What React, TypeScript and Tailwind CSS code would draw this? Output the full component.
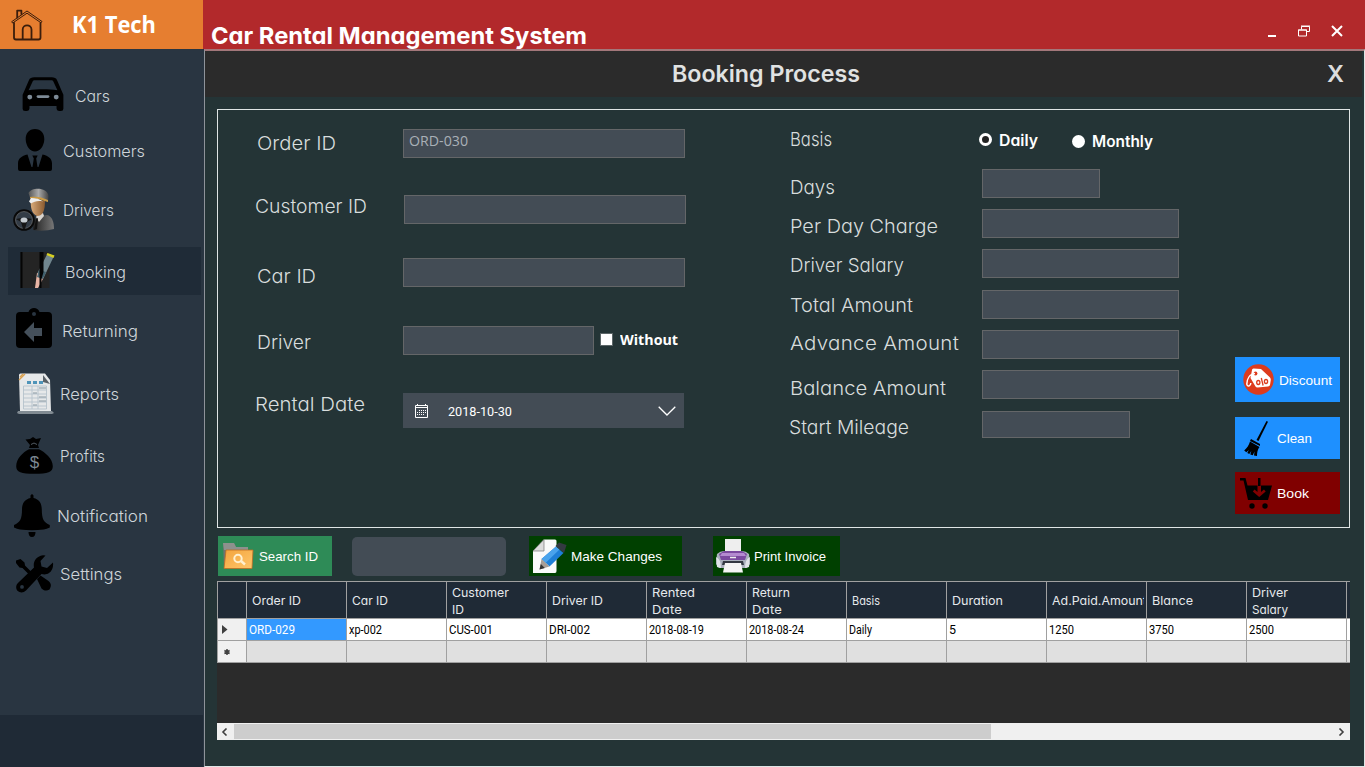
import { useLayoutEffect, useRef, type ReactNode } from "react";

const GOTHIC = "font-['Inter',sans-serif] [font-feature-settings:'cv11','ss03']";
const SANS = "font-['Liberation_Sans',sans-serif]";

/* A single line of text that fills a given width: the glyphs are widened a little, then tracked out, or condensed. */
function Fit({ w, className = "", children }: { w: number; className?: string; children: string }) {
  const ref = useRef<HTMLSpanElement>(null);
  useLayoutEffect(() => {
    const el = ref.current;
    if (!el) return;
    el.style.letterSpacing = "0px";
    el.style.transform = "none";
    const natural = el.getBoundingClientRect().width;
    const scale = Math.min(w / natural, 1.08);
    el.style.transform = `scaleX(${scale})`;
    if (natural * scale < w) el.style.letterSpacing = `${(w / scale - natural) / (children.length - 0.5)}px`;
  }, [w, children]);
  return (
    <span className={`block shrink-0 whitespace-nowrap ${className}`} style={{ width: w }}>
      <span ref={ref} className="inline-block origin-left">
        {children}
      </span>
    </span>
  );
}

const HomeIcon = () => (
  <svg className="h-8 w-8" viewBox="0 0 32 32" fill="none" stroke="#3a1d0c" strokeWidth="1.800" strokeLinejoin="round" strokeLinecap="round">
    <path d="M1 12.500 16 2l15 10.500-1 1.300L16 4.200 2 13.800z" strokeWidth="1" />
    <path d="M3 14v14.500a2 2 0 0 0 2 2h22.500a2 2 0 0 0 2-2V14M6.200 8.500V1.600h4.200v3.500M11.700 30V20.500c0-5.500 8.800-5.500 8.800 0V30" />
  </svg>
);
const CarIcon = () => (
  <svg className="h-[34px] w-[42px]" viewBox="0 0 42 34.700">
    <path fillRule="evenodd" d="M2 14 6.500 3.500C7.500 1 9.500.3 12 .3h18c2.500 0 4.500.7 5.500 3.200L40 14l1.800 4v14a2.500 2.500 0 0 1-2.500 2.700h-2a2.500 2.500 0 0 1-2.500-2.500V29.500H7.200v2.700a2.500 2.500 0 0 1-2.500 2.500h-2A2.500 2.500 0 0 1 .2 32V18zM6.300 13.500C15 12 27 12 35.700 13.500L31.800 5c-.6-1.200-1.300-1.600-2.800-1.600H13c-1.500 0-2.200.4-2.800 1.600z" />
    <g fill="#7d8a96"><circle cx="7.500" cy="20.500" r="2.500" /><circle cx="34.500" cy="20.500" r="2.500" /><rect x="14.500" y="18.500" width="13" height="3" rx="1.500" /></g>
  </svg>
);
const PersonIcon = () => (
  <svg className="h-[42px] w-[34px]" viewBox="0 0 34 42">
    <path d="M17 0c6 0 9.500 4.500 9.300 10.500C26 17 22 22.500 17 22.500S8 17 7.700 10.500C7.500 4.500 11 0 17 0zM9.500 25.500 13.500 38h1l1.300-8.500-1.500-3h5.400l-1.500 3 1.300 8.500h1l4-12.500c6 1.500 9.500 4 9.500 9V40q0 2-2 2H2q-2 0-2-2v-5.500c0-5 3.500-7.500 9.500-9z" />
  </svg>
);
const DriverIcon = () => (
  <svg className="h-[43px] w-[41px]" viewBox="0 0 41 43">
    <defs>
      <linearGradient id="coat" x1="0" x2="1"><stop stopColor="#222" /><stop offset="1" stopColor="#777" /></linearGradient>
      <linearGradient id="cap" x1="0" x2="1"><stop stopColor="#555" /><stop offset=".5" stopColor="#aaa" /><stop offset="1" stopColor="#444" /></linearGradient>
      <linearGradient id="skin" x1="0" x2="1"><stop stopColor="#d9ab7b" /><stop offset="1" stopColor="#8a5a2f" /></linearGradient>
    </defs>
    <path d="M20 42c0-8 2-13 6-14l8-1c5 1 7 7 7 14q-10 3-21 1z" fill="url(#coat)" />
    <path d="m23 29 2-3 5-1 1 3-5 6z" fill="#d8d4cf" /><path d="m23 31 2-1-1 11-3 1z" fill="#111" />
    <path d="M18 10c-1 10 1 16 6 18 6 0 8-6 8-15z" fill="url(#skin)" />
    <path d="M15.500 5c3-6 19-6 20 3l-.5 6c-6-3-12-5-18-4.500z" fill="url(#cap)" />
    <path d="M17 9c6-1 12 0 18 3v2c-6-2-12-4-18-3.500z" fill="#c99a45" />
    <path d="M16 13.500 18 10c5 0 9 1 12 3.500-5-1-9 0-12 2z" fill="#eee" />
    <circle cx="11" cy="32" r="9.700" fill="#333c46" stroke="#090909" strokeWidth="2.200" />
    <circle cx="11" cy="32" r="8.500" fill="none" stroke="#777" strokeWidth=".6" />
    <path d="M3 31q8-2 16 0l-5 3-2 7h-2l-2-7z" fill="#151515" /><ellipse cx="11" cy="32" rx="3.500" ry="2.600" fill="#c5cbd0" />
  </svg>
);
const BookIcon = () => (
  <svg className="h-9 w-[35px]" viewBox="0 0 35 36">
    <rect x=".5" width="29" height="36" fill="#242424" /><path d="M.5 0h2v36h-2z" fill="#050505" />
    <path d="m27.500 1.500 6.500 2.500-10 21-7-3z" fill="#71868e" /><path d="m27.500 1 7 2.500-1 2.500-7-3z" fill="#d6cf20" />
    <path d="m17 21 7 4-6 11h-3z" fill="#e9b5a5" /><path d="m19 18 7 2-3 7-6-2z" fill="#40606d" />
    <path d="M19.500 0h4v20l-2 7v9h-2z" fill="#050505" />
  </svg>
);
const ReturnIcon = () => (
  <svg className="h-10 w-9" viewBox="0 0 36 40">
    <path fillRule="evenodd" d="M4 4h8.500C14-1.300 22-1.300 23.500 4H32q4 0 4 4v28q0 4-4 4H4q-4 0-4-4V8q0-4 4-4zm14 0a2 2 0 1 0 0 4 2 2 0 0 0 0-4z" />
    <path d="m8 24 10-10v6h8v8h-8v6z" fill="#45505b" />
  </svg>
);
const ReportIcon = () => (
  <svg className="h-[41px] w-[37px]" viewBox="0 0 37 41">
    <path d="M1 38h34l2 2-2 1H2l-2-1z" fill="#818b92" /><path d="M2 2q0-1.500 1.500-1.500H28l5 6.500 1 31H3z" fill="#e6e8e9" />
    <path d="M26 2v7l7 2z" fill="#5a6268" /><path d="m2 7 6-6M3 4l3-3" stroke="#d9a150" strokeWidth="1.300" />
    <path d="M10 8h4v3h-4zM16 8h4v3h-4zM22 8h4v3h-4z" fill="#4e94b9" />
    <g fill="none" stroke="#b6c3cc" strokeWidth=".9"><path d="M6.500 13h23v23h-23zM15 13v23M21 13v23M6.500 17h23M6.500 21h23M6.500 25h23M6.500 29h23M6.500 33h23" /></g>
    <path d="M22 15h7M16 20h4M22 24h7M22 28h7M16 32h4" stroke="#8a99a4" strokeWidth="1.200" />
  </svg>
);
const MoneyIcon = () => (
  <svg className="h-[37px] w-[37px]" viewBox="0 0 37 37">
    <path d="M9.500 2.500 14 2l3-2 3 2 5-1-3 7 1 3h-10l1-3z" /><path d="M15 7.500q3-3 6 0" fill="none" stroke="#59636d" strokeWidth=".9" />
    <path d="M13 12.300h10c6 3 13.800 9.500 13.800 17 0 6-5 7.500-18.300 7.500S.2 35.300.2 29.300c0-7.500 6.800-14 12.800-17z" />
    <text x="18.500" y="31" textAnchor="middle" fontSize="17" fill="#7d8791" className={SANS}>$</text>
  </svg>
);
const BellIcon = () => (
  <svg className="h-[43px] w-9" viewBox="0 0 36 43">
    <path d="M16.500 1.500q1.500-2.500 3 0V4c5.500 1.300 8.300 5 8.300 11.500 0 9.500 2 13 8 15.500v2.500q-3 1.500-6 2Q18 37 6 35.500q-3-.5-6-2V31c6-2.500 8-6 8-15.500C8 9 11 5.300 16.500 4zM14.500 38h7q0 5-3.500 5t-3.500-5z" />
  </svg>
);
const ToolsIcon = () => (
  <svg className="h-[38px] w-[38px]" viewBox="0 0 38 38">
    <path d="M0 5.500 4.500 4l4 3.500.5 3 10 10-2.500 2.500-10-10-3-.5L0 8zM21 24l3.500-3.500 8 5.500c3 3 3 5 1 8.500-3 2-6 1-8-1z" />
    <path fillRule="evenodd" d="M27 .2 29.500.5 24.500 6l1 5.500 5.500 1.500 6-5.500q.8 7-4 10.500c-2.500 1.700-5 1.600-7.500 1L10 35.500c-2.500 2.500-6 2.500-8.300.5-2.200-2.300-2-6 .5-8.300L18 12.500c-1-5 1-11 9-12.300zM6 30a1.900 1.900 0 1 0 0 3.800A1.900 1.900 0 0 0 6 30z" />
  </svg>
);
const DiscountIcon = () => (
  <svg className="h-[31px] w-[31px]" viewBox="0 0 31 31">
    <circle cx="15.500" cy="15.500" r="15.200" fill="#dd3b1d" />
    <path d="M9 6q0-1.500 1.500-1.500L18 5l9 8.500q1 1 .8 2.500L27 21q-.4 1.300-2 1.400l-10.500 1.100q-1.500 0-2-1L7.500 14z" fill="#fff" />
    <circle cx="12.500" cy="9.500" r="1.900" fill="#dd3b1d" />
    <path d="M12 9.500C6.500 10 4 15 3.800 20c.4 3.500 4 2 4-1" fill="none" stroke="#fff" strokeWidth="1.500" />
    <g fill="none" stroke="#dd3b1d" strokeWidth="1.300"><ellipse cx="15.300" cy="18.500" rx="1.600" ry="2" /><ellipse cx="23" cy="17.500" rx="1.600" ry="2" /><path d="m18.300 14 1.800 7.500" /></g>
  </svg>
);
const BroomIcon = () => (
  <svg className="h-[35px] w-6" viewBox="0 0 24 35">
    <path d="m22.500 0 1.500.8L14.500 20l-2-1z" /><path d="m7 18 9 5v2l-10-5z" />
    <path d="M6 20.500 15.500 26c-2 2.500-2.500 5.500-2.500 9l-3-.5.500-4-1.700 3.700-2.500-.7 1-3.500-2 3-2-1 1.500-3-2.500 2.300L.2 29.500C3 27 5 24 6 20.500z" />
  </svg>
);
const CartIcon = () => (
  <svg className="h-[31px] w-8" viewBox="0 0 32 31">
    <path fillRule="evenodd" d="M0 0h5.500l2 7.500H32L28 22H8L3.500 2.500H0zM18 0h2.500v8H18zM17.500 7.500h3.500V14l3-2.500 1.700 2-6.500 5.500-6.400-5.500 1.700-2 3 2.500z" />
    <circle cx="12" cy="28" r="2.700" /><circle cx="25" cy="28" r="2.700" />
  </svg>
);
const FolderIcon = () => (
  <svg className="h-7 w-8" viewBox="0 0 32 28">
    <defs><linearGradient id="folder" x1="0" y1="0" x2="1" y2="1"><stop stopColor="#f3a43d" /><stop offset="1" stopColor="#ffc66b" /></linearGradient></defs>
    <path d="M1 1h11l2 4h12v21H2z" fill="#6f7470" /><path d="M1 1h11l2 4h12v3H2z" fill="#8d918d" />
    <path d="M4 8h27l-1 18.500H2z" fill="url(#folder)" stroke="#bb6c25" strokeWidth=".8" />
    <circle cx="16" cy="16.500" r="3.700" fill="none" stroke="#fff0cf" strokeWidth="2" /><path d="m19 19 4 3.500" stroke="#fff0cf" strokeWidth="2.400" />
  </svg>
);
const EditIcon = () => (
  <svg className="h-[35px] w-[35px]" viewBox="0 0 35 35">
    <path d="M12 .5h11q1.500 0 1.500 1.500v30q0 2-1.500 2H1V12z" fill="#fafafa" /><path d="M12 .5V12H1z" fill="#dcdcdc" stroke="#777" strokeWidth=".7" />
    <path d="M24 7.500 31.500 14 17.500 27.500 9.500 20z" fill="#1f7fd6" /><path d="m24 7.500 3.500 3L13.500 24l-4-4z" fill="#4aa3ec" />
    <path d="M9.500 20 17.500 27.500 7.500 30.500z" fill="#a79d96" /><path d="m8.800 25 4 4-5.300 1.500z" fill="#333" /><path d="M27 3.500 34.500 6 32 14l-8.500-7z" fill="#343a41" />
  </svg>
);
const PrinterIcon = () => (
  <svg className="h-[34px] w-[34px]" viewBox="0 0 34 34">
    <path d="M9 0h16v15H9z" fill="#eee" /><path d="M1 15q3-3 7-3h18q4 0 7 3l1 10-3 4H3l-3-4z" fill="#aab0bd" />
    <path d="m3 15 5-3h18l5 3-2 6H5z" fill="#7b4a9f" /><path d="M6 14h22l2 3H4z" fill="#b48bd0" />
    <path d="M0 18q5 2 5 11l-4-1zM34 18q-5 2-5 11l4-1z" fill="#e0e3e8" /><path d="M7 22h20l1 4H6z" fill="#333842" />
    <path d="M9 24h16l2 9.500H7z" fill="#f5f5f5" /><path d="M14 18.500h6" stroke="#eee" strokeWidth="1.500" />
  </svg>
);

type NavItem = { label: string; w: number; icon: ReactNode; row: string; gap: string };
const NAV: NavItem[] = [
  { label: "Cars", w: 35, icon: <CarIcon />, row: "h-[52px] pl-[22px] [&>svg]:mb-1", gap: "ml-[11px]" },
  { label: "Customers", w: 82, icon: <PersonIcon />, row: "h-[58px] pl-[18px] [&>svg]:mb-[2px]", gap: "ml-[11px]" },
  { label: "Drivers", w: 51, icon: <DriverIcon />, row: "h-[60px] pl-[13px] [&>svg]:mb-[2px]", gap: "ml-[9px]" },
  { label: "Booking", w: 61, icon: <BookIcon />, row: "ml-2 mr-[2px] mt-[7px] h-12 bg-[#1f2b37] pl-3 [&>svg]:mb-[2px]", gap: "ml-[10px] mt-[2px]" },
  { label: "Returning", w: 76, icon: <ReturnIcon />, row: "h-[72px] pl-4 [&>svg]:mb-[6px]", gap: "ml-[10px]" },
  { label: "Reports", w: 59, icon: <ReportIcon />, row: "h-[54px] pl-[17px] [&>svg]:mb-[2px]", gap: "ml-[6px]" },
  { label: "Profits", w: 45, icon: <MoneyIcon />, row: "h-[70px] pl-4 [&>svg]:mb-[2px]", gap: "ml-[7px]" },
  { label: "Notification", w: 91, icon: <BellIcon />, row: "h-[50px] pl-[14px] [&>svg]:mb-[2px]", gap: "ml-[7px]" },
  { label: "Settings", w: 62, icon: <ToolsIcon />, row: "h-[66px] pl-4", gap: "ml-[6px]" },
];

const LEFT_LABELS = [
  { t: "Order ID", w: 79, c: "mt-[21px] ml-[2px]" },
  { t: "Customer ID", w: 112, c: "mt-[39px]" },
  { t: "Car ID", w: 59, c: "mt-[46px] ml-[2px]" },
  { t: "Driver", w: 54, c: "mt-[42px] ml-[2px]" },
  { t: "Rental Date", w: 110, c: "mt-[38px]" },
];
const RIGHT_LABELS = [
  { t: "Basis", w: 42, c: "mt-[17px]" },
  { t: "Days", w: 45, c: "mt-6" },
  { t: "Per Day Charge", w: 148, c: "mt-[15px]" },
  { t: "Driver Salary", w: 114, c: "mt-[15px]" },
  { t: "Total Amount", w: 123, c: "mt-4" },
  { t: "Advance Amount", w: 169, c: "mt-[14px]" },
  { t: "Balance Amount", w: 156, c: "mt-[21px]" },
  { t: "Start Mileage", w: 120, c: "mt-[15px] -ml-px" },
];

function Labels({ items, className }: { items: typeof LEFT_LABELS; className: string }) {
  return (
    <div className={`flex shrink-0 flex-col ${className}`}>
      {items.map((l) => (
        <Fit key={l.t} w={l.w} className={`h-6 text-[19px] leading-[25px] font-light text-[#d8dddd] ${GOTHIC} ${l.c}`}>
          {l.t}
        </Fit>
      ))}
    </div>
  );
}

const Box = ({ className, children }: { className: string; children?: ReactNode }) => (
  <div className={`shrink-0 border border-[#646668] bg-[#434c55] ${className}`}>{children}</div>
);

const COLUMNS = [
  { h: ["Order ID"], hw: [49], v: "ORD-029", w: 46 },
  { h: ["Car ID"], hw: [36], v: "xp-002", w: 33 },
  { h: ["Customer", "ID"], hw: [57, 12], v: "CUS-001", w: 44 },
  { h: ["Driver ID"], hw: [51], v: "DRI-002", w: 41 },
  { h: ["Rented", "Date"], hw: [43, 30], v: "2018-08-19", w: 55 },
  { h: ["Return", "Date"], hw: [38, 30], v: "2018-08-24", w: 55 },
  { h: ["Basis"], hw: [28], v: "Daily", w: 23 },
  { h: ["Duration"], hw: [51], v: "5", w: 7 },
  { h: ["Ad.Paid.Amount"], hw: [95], v: "1250", w: 25 },
  { h: ["Blance"], hw: [41], v: "3750", w: 25 },
  { h: ["Driver", "Salary"], hw: [36, 36], v: "2500", w: 25 },
];

function Grid() {
  return (
    <div className="mt-[5px] ml-3 flex h-[159px] w-[1133px] shrink-0 flex-col overflow-hidden bg-[#2b2b2b]">
      <div className="flex h-[38px] shrink-0 border-y border-l border-[#a0a0a0] bg-[#1f2a36]">
        <div className="w-[29px] shrink-0 border-r border-[#a0a0a0]" />
        {COLUMNS.map((c) => (
          <div key={c.v} className="flex w-[100px] shrink-0 flex-col justify-center border-r border-[#a0a0a0]">
            <div className="mr-[2px] overflow-hidden pt-px pl-[5px]">
              {c.h.map((line, i) => (
                <Fit key={line} w={c.hw[i]} className={`text-[12px] leading-[17px] text-[#e6e9ec] ${GOTHIC}`}>
                  {line}
                </Fit>
              ))}
            </div>
          </div>
        ))}
      </div>
      <div className="flex h-[22px] shrink-0 border-b border-l border-[#a0a0a0] bg-white">
        <div className="flex w-[29px] shrink-0 items-center border-r border-[#a0a0a0] bg-[#f0f0f0] pl-1">
          <svg className="h-[9px] w-[6px]" viewBox="0 0 6 9"><path d="M0 0v9l5.500-4.500z" fill="#404040" /></svg>
        </div>
        {COLUMNS.map((c, i) => (
          <div key={c.v} className={`flex w-[100px] shrink-0 items-center border-r border-[#a0a0a0] pl-[2px] ${i === 0 ? "bg-[#3399ff] text-white" : "text-black"}`}>
            <Fit w={c.w} className="font-['Roboto',sans-serif] text-[12px] leading-4">{c.v}</Fit>
          </div>
        ))}
      </div>
      <div className="flex h-[22px] shrink-0 border-b border-l border-[#a0a0a0] bg-[#e0e0e0]">
        <div className="flex w-[29px] shrink-0 items-center border-r border-[#a0a0a0] bg-[#f0f0f0] pl-[6px]">
          <svg className="h-[6px] w-[6px]" viewBox="0 0 6 6" stroke="#404040" strokeWidth="1.500"><path d="M3 0v6M.4 1.500l5.200 3M5.600 1.500l-5.200 3" /><circle cx="3" cy="3" r=".8" /></svg>
        </div>
        {COLUMNS.map((c) => (
          <div key={c.v} className="w-[100px] shrink-0 border-r border-[#a0a0a0]" />
        ))}
      </div>
      <div className="mt-auto flex h-[17px] shrink-0 items-center bg-[#f0f0f0]">
        <svg className="mr-[6px] ml-1 h-2 w-[7px]" viewBox="0 0 7 8" fill="none" stroke="#404040" strokeWidth="1.600"><path d="M5.500.5 2 4l3.500 3.500" /></svg>
        <div className="h-[15px] w-[757px] bg-[#cdcdcd]" />
        <svg className="mr-[5px] ml-auto h-2 w-[7px]" viewBox="0 0 7 8" fill="none" stroke="#404040" strokeWidth="1.600"><path d="M1.500.5 5 4 1.500 7.500" /></svg>
      </div>
    </div>
  );
}

function Action({ w, label, icon, className }: { w: number; label: string; icon: ReactNode; className: string }) {
  return (
    <button className={`flex shrink-0 items-center text-white ${className}`}>
      {icon}
      <Fit w={w} className={`mt-[2px] ml-auto text-left text-[13.500px] leading-4 ${SANS}`}>{label}</Fit>
    </button>
  );
}

export default function App() {
  return (
    <div className="flex h-[767px] w-[1365px] overflow-hidden bg-[#293541]">
      <aside className="flex w-[203px] shrink-0 flex-col">
        <div className="flex h-[49px] shrink-0 items-center bg-[#e67e30] pl-[11px]">
          <HomeIcon />
          <Fit w={84} className="mb-[2px] ml-[29px] font-['Open_Sans',sans-serif] text-[24px] leading-8 font-bold text-white">K1 Tech</Fit>
        </div>
        <nav className="flex flex-col pt-[21px]">
          {NAV.map((n) => (
            <div key={n.label} className={`flex shrink-0 items-center ${n.row}`}>
              {n.icon}
              <Fit w={n.w} className={`text-[16.500px] leading-[25px] font-light text-[#cfd5da] ${GOTHIC} ${n.gap}`}>{n.label}</Fit>
            </div>
          ))}
        </nav>
        <div className="mt-auto h-[52px] bg-[#1f2a36]" />
      </aside>

      <div className="flex w-[1162px] flex-col">
        <header className="flex h-[49px] shrink-0 bg-[#b2292b] pl-2 text-white">
          <Fit w={376} className={`mt-[21px] text-[23.500px] leading-[30px] font-bold ${GOTHIC}`}>Car Rental Management System</Fit>
          <div className="mt-6 mr-[22px] ml-auto flex h-[13px] items-center">
            <span className="mt-[10px] mr-[22px] h-[2px] w-2 bg-white" />
            <svg className="mr-[21px] h-3 w-3" viewBox="0 0 12 12" fill="none" stroke="#fff" strokeWidth="1"><path d="M.5 5v6h8V5zM0 5h9M3.500 4.500V1.500h8v5h-3M3 1h9" /></svg>
            <svg className="h-3 w-3" viewBox="0 0 12 12" stroke="#fff" strokeWidth="2"><path d="m1 1 10 10M11 1 1 11" /></svg>
          </div>
        </header>

        <main className="ml-px flex h-[718px] w-[1161px] flex-col border-t-2 border-r border-b border-l border-t-[#a3777a] border-r-[#dfe5e5] border-b-[#dfe5e5] border-l-[#8e939a] bg-[#243436]">
          <div className="mr-[2px] flex h-[46px] shrink-0 items-center bg-[#2b2b2b]">
            <Fit w={188} className={`ml-[467px] text-[22.500px] leading-8 font-semibold text-[#e0e2e2] ${GOTHIC}`}>Booking Process</Fit>
            <Fit w={17} className={`mr-[18px] ml-auto text-[23px] leading-8 font-semibold text-[#dcdcdc] ${GOTHIC}`}>X</Fit>
          </div>

          <section className="mt-3 ml-3 flex h-[419px] w-[1133px] shrink-0 border border-[#dfe5e5]">
            <Labels items={LEFT_LABELS} className="ml-[37px] w-[148px]" />
            <div className="flex w-[283px] shrink-0 flex-col">
              <Box className="mt-[19px] h-[29px] w-[282px] pl-[5px]">
                <Fit w={59} className="font-['Open_Sans',sans-serif] text-[14.500px] leading-[21px] text-[#a9b0b7]">ORD-030</Fit>
              </Box>
              <Box className="mt-[37px] ml-px h-[29px] w-[282px]" />
              <Box className="mt-[34px] h-[29px] w-[282px]" />
              <div className="mt-[39px] flex h-[29px] items-center">
                <Box className="h-[29px] w-[191px]" />
                <span className="mb-[2px] ml-[6px] h-[13px] w-[13px] shrink-0 border border-[#5c6668] bg-white" />
                <Fit w={58} className="mb-[2px] ml-[7px] font-['Open_Sans',sans-serif] text-[14px] leading-5 font-bold text-white">Without</Fit>
              </div>
              <div className="mt-[38px] flex h-[35px] w-[281px] items-center bg-[#434c55] text-white">
                <svg className="mt-px ml-3 h-[14px] w-[13px]" viewBox="0 0 13 14" fill="none" stroke="#fff"><path d="M.5 1.500h12v12H.5zM0 3.500h13M2.500 0v2M10.500 0v2" /><path d="M4 6.500h7M2 8.500h9M2 10.500h7" strokeDasharray="1 1" /></svg>
                <Fit w={64} className="ml-5 font-['Roboto',sans-serif] text-[13.500px] leading-5">2018-10-30</Fit>
                <svg className="mr-2 ml-auto h-[10px] w-[18px]" viewBox="0 0 18 10" fill="none" stroke="#fff" strokeWidth="1.300"><path d="m.7.7 8.300 8.300L17.300.7" /></svg>
              </div>
            </div>
            <Labels items={RIGHT_LABELS} className="ml-[104px] w-[188px]" />
            <div className="ml-1 flex w-[200px] shrink-0 flex-col">
              <div className="-ml-[3px] mt-[17px] flex h-[27px] shrink-0 items-start text-white">
                <span className="mt-[6px] h-[13px] w-[13px] shrink-0 rounded-full border-[3px] border-white bg-[#222]" />
                <Fit w={39} className={`ml-[7px] mt-[2px] text-[15.500px] leading-6 font-semibold ${GOTHIC}`}>Daily</Fit>
                <span className="mt-2 ml-[34px] h-[13px] w-[13px] shrink-0 rounded-full bg-white" />
                <Fit w={61} className={`ml-[7px] mt-[3px] text-[15.500px] leading-6 font-semibold ${GOTHIC}`}>Monthly</Fit>
              </div>
              <Box className="mt-[15px] h-[29px] w-[118px]" />
              <Box className="mt-[11px] h-[29px] w-[197px]" />
              <Box className="mt-[11px] h-[29px] w-[197px]" />
              <Box className="mt-3 h-[29px] w-[197px]" />
              <Box className="mt-[11px] h-[29px] w-[197px]" />
              <Box className="mt-[11px] h-[29px] w-[197px]" />
              <Box className="mt-3 h-[27px] w-[148px]" />
            </div>
            <div className="mr-[9px] ml-auto flex w-[105px] flex-col pt-[247px]">
              <Action className="h-[45px] bg-[#1e90ff] pr-2 pl-2" w={53} label="Discount" icon={<DiscountIcon />} />
              <Action className="mt-[15px] h-[42px] bg-[#1e90ff] pr-7 pl-[9px]" w={35} label="Clean" icon={<BroomIcon />} />
              <Action className="mt-[13px] h-[42px] bg-[#800000] pr-[31px] pl-[5px]" w={32} label="Book" icon={<CartIcon />} />
            </div>
          </section>

          <div className="mt-2 ml-[13px] flex h-10 shrink-0">
            <Action className="w-[114px] bg-[#2e8b57] pr-[14px] pl-1" w={59} label="Search ID" icon={<FolderIcon />} />
            <div className="mt-px ml-5 h-[39px] w-[154px] rounded-[5px] bg-[#434c55]" />
            <Action className="ml-[23px] w-[153px] bg-[#004000] pr-5 pl-[3px]" w={91} label="Make Changes" icon={<EditIcon />} />
            <Action className="ml-[31px] w-[127px] bg-[#004000] pr-[14px] pl-[3px]" w={72} label="Print Invoice" icon={<PrinterIcon />} />
          </div>

          <Grid />
        </main>
      </div>
    </div>
  );
}
